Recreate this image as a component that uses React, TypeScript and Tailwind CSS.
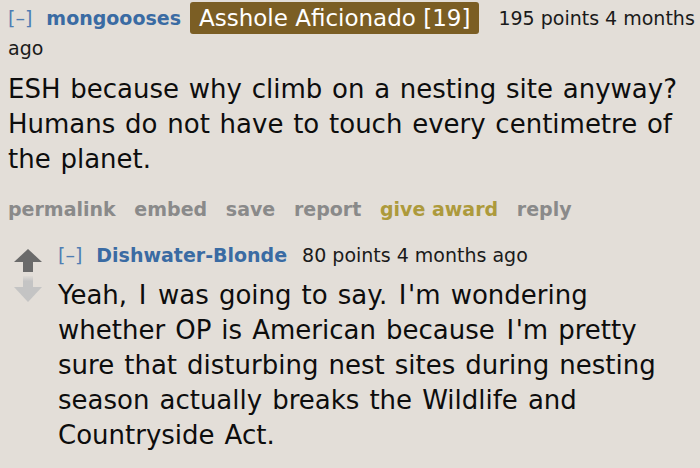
import React from "react";

const font = { fontFamily: '"DejaVu Sans", Verdana, sans-serif' };

function UpArrow() {
  return (
    <svg width="28" height="23" viewBox="0 0 28 23">
      <polygon points="0,13 14,0 28,13" fill="#6a6a6a" />
      <rect x="9" y="12.5" width="10" height="10.5" fill="#6a6a6a" />
    </svg>
  );
}

function DownArrow() {
  return (
    <svg width="28" height="26" viewBox="0 0 28 26">
      <defs>
        <linearGradient id="dg" x1="0" y1="0" x2="0" y2="1">
          <stop offset="0" stopColor="#c4c4c4" stopOpacity="0.15" />
          <stop offset="0.45" stopColor="#c4c4c4" stopOpacity="1" />
          <stop offset="1" stopColor="#c4c4c4" stopOpacity="1" />
        </linearGradient>
      </defs>
      <rect x="9" y="0" width="10" height="11.5" fill="url(#dg)" />
      <polygon points="0,11 28,11 14,26" fill="#c4c4c4" />
    </svg>
  );
}

function CapI() {
  return <span className="mx-[1.6px]">I</span>;
}

export default function App() {
  return (
    <div
      className="w-[700px] h-[468px] overflow-hidden bg-[#e3ded8] pl-[8px] text-[#0d0d0d]"
      style={font}
    >
      {/* comment 1 header */}
      <div className="pt-[3px] text-[19px] leading-[30px] text-[#1a1a1a]">
        <span className="text-[#4f7db3] mr-[14px]">[–]</span>
        <span className="font-bold text-[#3a6ba3]">mongoooses</span>
        <span className="inline-block ml-[9px] h-[32px] leading-[32px] my-[-1px] align-[-1px] px-[9px] rounded-[3px] bg-[#7b5e24] text-white text-[23px]">
          Asshole Aficionado [19]
        </span>
        <span className="ml-[19px]">195 points 4 months</span>
        <br />
        <span>ago</span>
      </div>

      {/* comment 1 body */}
      <div className="mt-[8.5px] text-[26px] leading-[35px] whitespace-nowrap [word-spacing:1.5px]">
        ESH because why climb on a nesting site anyway?
        <br />
        Humans do not have to touch every centimetre of
        <br />
        the planet.
      </div>

      {/* actions */}
      <div className="mt-[17px] flex gap-[18.7px] text-[19px] leading-[30px] font-bold text-[#8a8a8a]">
        <span>permalink</span>
        <span>embed</span>
        <span>save</span>
        <span>report</span>
        <span className="text-[#ad9a3c]">give award</span>
        <span>reply</span>
      </div>

      {/* comment 2 */}
      <div className="mt-[16px] flex">
        <div className="ml-[6px] mt-[9.5px] w-[28px] flex flex-col gap-[4px]">
          <UpArrow />
          <DownArrow />
        </div>
        <div className="ml-[16px]">
          <div className="text-[19px] leading-[30px] text-[#1a1a1a]">
            <span className="text-[#4f7db3] mr-[14px]">[–]</span>
            <span className="font-bold text-[#3a6ba3]">Dishwater-Blonde</span>
            <span className="ml-[15px]">80 points 4 months ago</span>
          </div>
          <div className="mt-[8px] text-[26px] leading-[35px] whitespace-nowrap [word-spacing:1.8px]">
            Yeah, <CapI /> was going to say. <CapI />'m wondering
            <br />
            whether OP is American because <CapI />'m pretty
            <br />
            sure that disturbing nest sites during nesting
            <br />
            season actually breaks the Wildlife and
            <br />
            Countryside Act.
          </div>
        </div>
      </div>
    </div>
  );
}
